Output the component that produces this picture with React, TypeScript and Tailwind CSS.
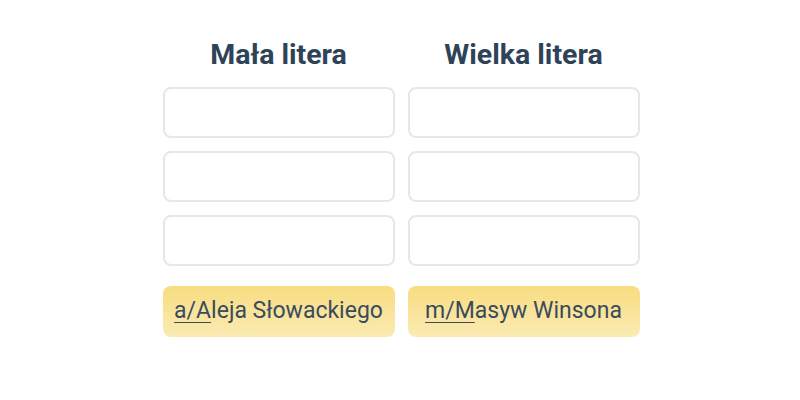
import React from 'react'

const Column = ({ title, prefix, rest }: { title: string; prefix: string; rest: string }) => {
    return (
        <div className="flex flex-col w-[232px] gap-[13px]">
            <h2 className="text-[28.5px] leading-[36px] font-bold text-[#2f4358] text-center mb-[1px]">{title}</h2>
            {[0, 1, 2].map((i) => (
                <input
                    key={i}
                    type="text"
                    className="h-[51px] w-full rounded-[8px] border-2 border-[#e4e8ec] bg-white outline-none"
                />
            ))}
            <button className="mt-[7px] h-[51px] w-full rounded-[8px] bg-gradient-to-b from-[#f7dc7f] to-[#fbebb3] text-[23px] text-[#3a4b5c] text-center">
                <span className="underline decoration-1 underline-offset-[4px]">{prefix}</span>{rest}
            </button>
        </div>
    )
}

export default function App() {
    return (
        <div className="w-[800px] h-[400px] bg-white flex justify-center pt-[37px] pl-[2px] font-['Roboto',sans-serif]">
            <div className="flex gap-[13px]">
                <Column title="Mała litera" prefix="a/A" rest="leja Słowackiego" />
                <Column title="Wielka litera" prefix="m/M" rest="asyw Winsona" />
            </div>
        </div>
    )
}
